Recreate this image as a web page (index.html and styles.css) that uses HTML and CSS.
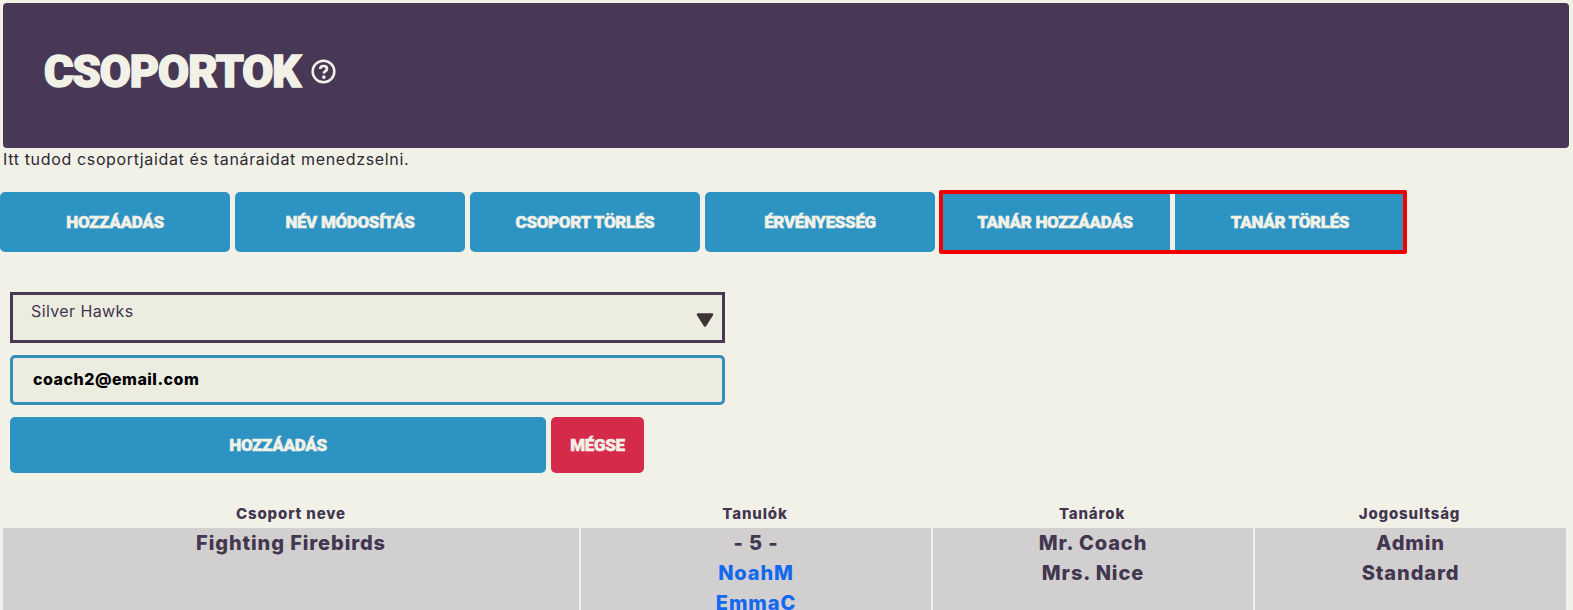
FILE: index.html
```html
<!DOCTYPE html>
<html lang="hu">
<head>
<meta charset="utf-8">
<title>Csoportok</title>
<link rel="stylesheet" href="styles.css">
</head>
<body>
<div class="page">
  <header class="hero">
    <h1 class="hero-title">CSOPORTOK</h1>
    <svg class="help" viewBox="0 0 24 24" width="25" height="25" aria-hidden="true">
      <circle cx="12" cy="12" r="10.4" fill="none" stroke="#f2f1e8" stroke-width="2.4"/>
      <path d="M8.8 9.6c.1-1.9 1.5-2.9 3.3-2.9 1.9 0 3.2 1.1 3.2 2.7 0 1.3-.8 1.9-1.7 2.5-.9.6-1.3 1-1.3 2" fill="none" stroke="#f2f1e8" stroke-width="2.6"/>
      <circle cx="12.3" cy="17.4" r="1.7" fill="#f2f1e8"/>
    </svg>
  </header>
  <p class="intro">Itt tudod csoportjaidat és tanáraidat menedzselni.</p>
  <nav class="tabs">
    <button class="btn tab">HOZZÁADÁS</button>
    <button class="btn tab">NÉV MÓDOSÍTÁS</button>
    <button class="btn tab">CSOPORT TÖRLÉS</button>
    <button class="btn tab">ÉRVÉNYESSÉG</button>
    <div class="tab-group">
      <button class="btn tab square">TANÁR HOZZÁADÁS</button>
      <button class="btn tab square">TANÁR TÖRLÉS</button>
    </div>
  </nav>
  <form class="form">
    <div class="select">
      <span>Silver Hawks</span>
      <svg class="caret" viewBox="0 0 18 14" width="18" height="14" aria-hidden="true">
        <path d="M2 1.5h14L9 12.5z" fill="#3d3535" stroke="#3d3535" stroke-width="2.5" stroke-linejoin="round"/>
      </svg>
    </div>
    <input class="input" type="text" value="coach2@email.com">
    <div class="actions">
      <button type="button" class="btn submit">HOZZÁADÁS</button>
      <button type="button" class="btn cancel">MÉGSE</button>
    </div>
  </form>
  <table class="groups">
    <colgroup>
      <col class="c1"><col class="c2"><col class="c3"><col class="c4">
    </colgroup>
    <thead>
      <tr><th>Csoport neve</th><th>Tanulók</th><th>Tanárok</th><th>Jogosultság</th></tr>
    </thead>
    <tbody>
      <tr>
        <td><div class="line">Fighting Firebirds</div></td>
        <td>
          <div class="line">- 5 -</div>
          <a class="line link" href="#">NoahM</a>
          <a class="line link" href="#">EmmaC</a>
        </td>
        <td><div class="line">Mr. Coach</div><div class="line">Mrs. Nice</div></td>
        <td><div class="line">Admin</div><div class="line">Standard</div></td>
      </tr>
    </tbody>
  </table>
</div>
</body>
</html>
```
FILE: styles.css
```css
* { box-sizing: border-box; }
html, body { margin: 0; padding: 0; background: #f2f1e8; }
.page {
  height: 610px;
  overflow: hidden;
  font-family: Inter, "Noto Sans", sans-serif;
  color: #43364f;
}
.hero {
  margin: 3px 4px 0 3px;
  height: 145px;
  padding: 0 0 8px 41px;
  background: #483855;
  border-radius: 4px;
  display: flex;
  align-items: center;
  gap: 11px;
}
.hero-title {
  margin: 0;
  font-family: Roboto, sans-serif;
  font-weight: 900;
  font-size: 45px;
  line-height: 56px;
  letter-spacing: -1px;
  color: #f2f1e8;
  -webkit-text-stroke: 1.6px #f2f1e8;
}
.help { flex: none; }
.intro {
  margin: 0;
  padding: 1px 0 0 3px;
  height: 44px;
  font-size: 16px;
  line-height: 20px;
  letter-spacing: 0.65px;
  color: #2d2a32;
}
.btn {
  border: 0;
  border-radius: 5px;
  background: #2d93c2;
  color: #f2f1e8;
  font-family: Roboto, sans-serif;
  font-weight: 900;
  font-size: 17px;
  letter-spacing: -0.35px;
  padding: 0 0 1px;
  -webkit-text-stroke: 0.5px #f2f1e8;
}
.tabs { display: flex; gap: 5px; }
.tab { width: 230px; height: 60px; }
.tab-group { display: flex; gap: 5px; position: relative; }
.tab-group::after {
  content: "";
  position: absolute;
  inset: -2px -2px -2px -1px;
  border: 4px solid #f00000;
  border-radius: 2px;
  pointer-events: none;
}
.square { border-radius: 0; }
.form {
  width: 715px;
  margin: 40px 0 0 10px;
  display: flex;
  flex-direction: column;
}
.select {
  height: 51px;
  border: 3px solid #483855;
  background: #edece0;
  padding: 6px 0 0 18px;
  font-size: 16px;
  line-height: 20px;
  letter-spacing: 0.4px;
  display: flex;
  justify-content: space-between;
}
.caret { margin: 12px 8px 0 0; }
.input {
  margin-top: 12px;
  height: 50px;
  width: 100%;
  border: 3px solid #348fbb;
  border-radius: 5px;
  background: #edece0;
  padding: 0 0 2px 20px;
  font-family: Inter, sans-serif;
  font-weight: 800;
  font-size: 16px;
  letter-spacing: 0.5px;
  color: #000;
  outline: none;
}
.actions { display: flex; gap: 5px; margin-top: 12px; }
.submit { width: 536px; height: 56px; }
.cancel { width: 93px; height: 56px; background: #d62a4a; }
.groups {
  margin: 29px 0 0 3px;
  width: 1563px;
  table-layout: fixed;
  border-collapse: separate;
  border-spacing: 0;
}
.c1 { width: 576px; }
.c2 { width: 352px; }
.c3 { width: 322px; }
.c4 { width: 313px; }
.groups th {
  height: 26px;
  padding: 0 0 3px;
  font-size: 15px;
  font-weight: 800;
  line-height: 20px;
  letter-spacing: 0.85px;
  text-align: center;
}
.groups td {
  padding: 0;
  vertical-align: top;
  text-align: center;
  background: #d1cfd0;
  border-left: 2px solid #f2f1e8;
}
.groups td:first-child { border-left: 0; }
.line {
  display: block;
  height: 30px;
  font-size: 20px;
  line-height: 30px;
  font-weight: 800;
  letter-spacing: 0.9px;
}
.link { color: #1269f0; text-decoration: none; }
```
